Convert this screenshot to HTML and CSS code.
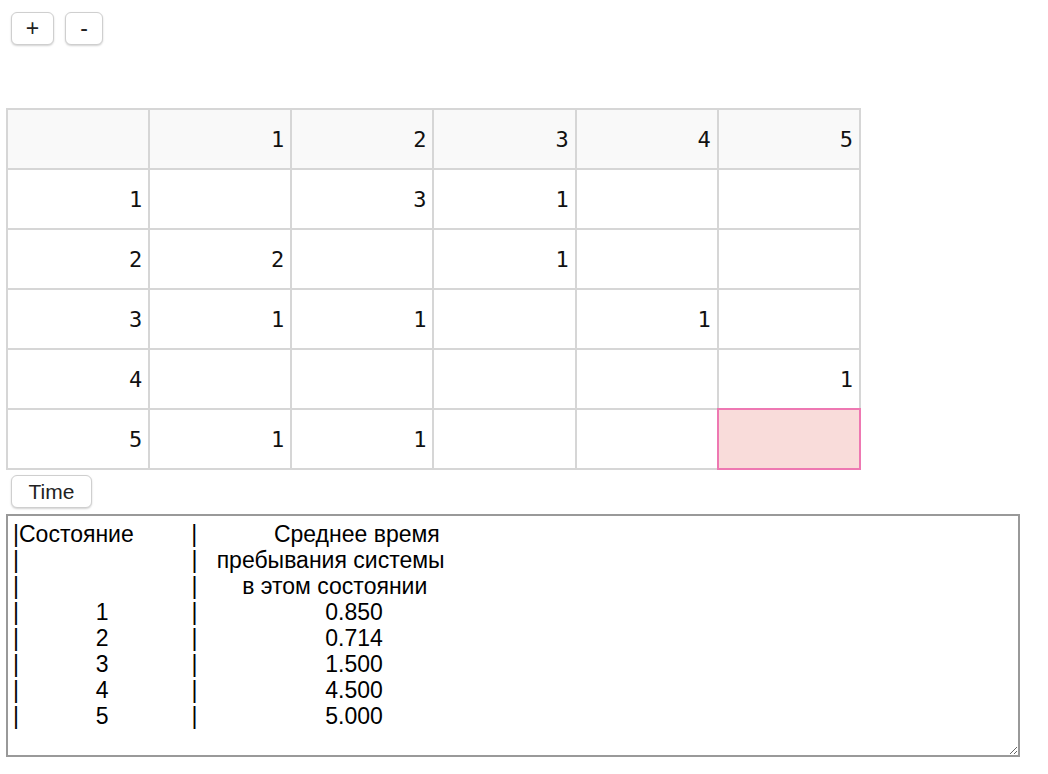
FILE: index.html
```html
<!DOCTYPE html>
<html lang="ru">
<head>
<meta charset="utf-8">
<title>Matrix</title>
<link rel="stylesheet" href="styles.css">
</head>
<body>
<div class="controls">
  <button class="btn btn-plus">+</button>
  <button class="btn btn-minus">-</button>
</div>
<table class="matrix">
  <tr class="head"><td></td><td>1</td><td>2</td><td>3</td><td>4</td><td>5</td></tr>
  <tr><td>1</td><td></td><td>3</td><td>1</td><td></td><td></td></tr>
  <tr><td>2</td><td>2</td><td></td><td>1</td><td></td><td></td></tr>
  <tr><td>3</td><td>1</td><td>1</td><td></td><td>1</td><td></td></tr>
  <tr><td>4</td><td></td><td></td><td></td><td></td><td>1</td></tr>
  <tr><td>5</td><td>1</td><td>1</td><td></td><td></td><td class="active"></td></tr>
</table>
<div class="time-row"><button class="btn btn-time">Time</button></div>
<textarea class="output">|Состояние         |            Среднее время
|                           |   пребывания системы
|                           |       в этом состоянии
|            1             |                    0.850
|            2             |                    0.714
|            3             |                    1.500
|            4             |                    4.500
|            5             |                    5.000
</textarea>
</body>
</html>
```

FILE: styles.css
```css
html, body {
  margin: 0;
  padding: 0;
  background: #ffffff;
}

body {
  font-family: "Liberation Sans", Arial, sans-serif;
  color: #111;
}

.controls {
  display: flex;
  gap: 11px;
  padding: 12px 0 0 11px;
}

.btn {
  background: #ffffff;
  border: 1px solid #cfcfcf;
  border-radius: 6px;
  box-shadow: 0 1px 2px rgba(0, 0, 0, 0.18);
  font-family: "Liberation Sans", Arial, sans-serif;
  color: #222;
  padding: 0;
  margin: 0;
  cursor: pointer;
}

.btn-plus {
  width: 43px;
  height: 33px;
  font-size: 23px;
  line-height: 1;
}

.btn-minus {
  width: 38px;
  height: 33px;
  font-size: 23px;
  line-height: 1;
}

.matrix {
  margin: 63px 0 0 6px;
  border-collapse: collapse;
  table-layout: fixed;
  width: 855px;
}

.matrix td {
  border: 2px solid #d6d6d6;
  height: 58px;
  padding: 0 6px;
  text-align: right;
  vertical-align: middle;
  font-family: "DejaVu Sans Mono", monospace;
  font-size: 22px;
  color: #111;
}

.matrix .head td {
  background: #f9f9f9;
}

.matrix td.active {
  background: #f9dcda;
  outline: 2px solid #ee78b2;
  outline-offset: -1px;
}

.time-row {
  padding: 5px 0 0 11px;
}

.btn-time {
  width: 81px;
  height: 33px;
  font-size: 21px;
}

.output {
  display: block;
  box-sizing: border-box;
  margin: 6px 0 0 6px;
  width: 1014px;
  height: 243px;
  border: 2px solid #999999;
  border-radius: 0;
  padding: 5px 5px;
  font-family: "Liberation Sans", Arial, sans-serif;
  font-size: 23px;
  line-height: 26px;
  color: #000;
  white-space: pre;
  overflow: hidden;
  background: #fff;
}
```
